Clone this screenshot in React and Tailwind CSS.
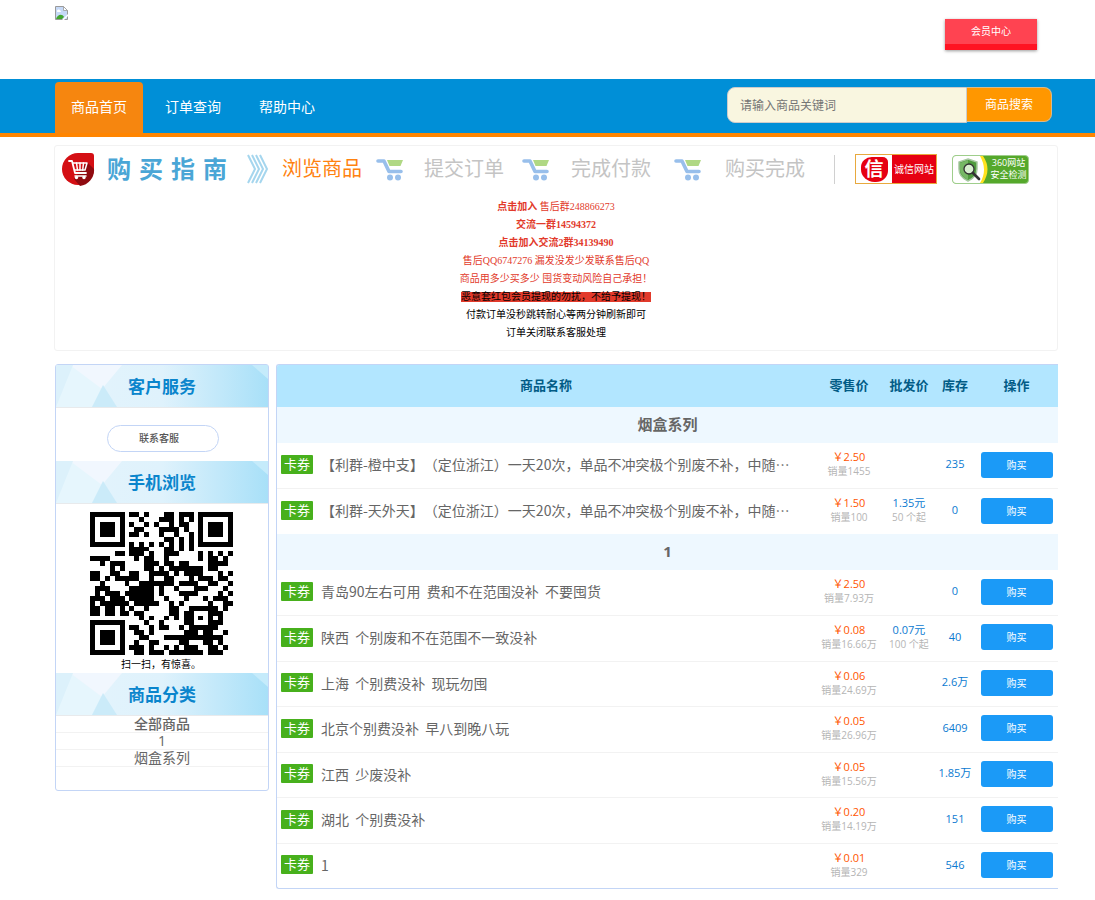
// src/App.jsx
const navItems = [
  { name: '商品首页', active: true },
  { name: '订单查询', active: false },
  { name: '帮助中心', active: false },
];

const steps = [
  { name: '提交订单', spacing: 'ml-[14px] gap-5' },
  { name: '完成付款', spacing: 'ml-[18px] gap-[21px]' },
  { name: '购买完成', spacing: 'ml-[23px] gap-[23px]' },
];

const categories = ['全部商品', '1', '烟盒系列'];

const groups = [
  {
    name: '烟盒系列',
    products: [
      {
        title: '【利群-橙中支】（定位浙江）一天20次，单品不冲突极个别废不补，中随…',
        price: '2.50',
        sales: '1455',
        stock: '235',
      },
      {
        title: '【利群-天外天】（定位浙江）一天20次，单品不冲突极个别废不补，中随…',
        price: '1.50',
        sales: '100',
        bulk: { price: '1.35元', min: '50 个起' },
        stock: '0',
      },
    ],
  },
  {
    name: '1',
    products: [
      { title: '青岛90左右可用  费和不在范围没补  不要囤货', price: '2.50', sales: '7.93万', stock: '0' },
      {
        title: '陕西  个别废和不在范围不一致没补',
        price: '0.08',
        sales: '16.66万',
        bulk: { price: '0.07元', min: '100 个起' },
        stock: '40',
      },
      { title: '上海  个别费没补  现玩勿囤', price: '0.06', sales: '24.69万', stock: '2.6万' },
      { title: '北京个别费没补  早八到晚八玩', price: '0.05', sales: '26.96万', stock: '6409' },
      { title: '江西  少废没补', price: '0.05', sales: '15.56万', stock: '1.85万' },
      { title: '湖北  个别费没补', price: '0.20', sales: '14.19万', stock: '151' },
      { title: '1', price: '0.01', sales: '329', stock: '546' },
    ],
  },
];

const qrRows = [
  '11111110110100011011101111111',
  '10000010001000111010101000001',
  '10111010100101001011001011101',
  '10111010011000111101001011101',
  '10111010110100100100101011101',
  '10000010000000011010101000001',
  '11111110101010101010101111111',
  '00000000111100011010100000000',
  '00000110111010011100001010101',
  '11110000010110010000001011010',
  '00101110000111011011000011110',
  '00001010000110101111111011000',
  '11001100110011110101111000101',
  '11010111110010011000101110110',
  '00100001001111111011110011001',
  '01110000111110100100011100010',
  '01011101111110100011110000101',
  '11101110111110010001000101110',
  '10111111011111001010000010011',
  '11011010100100001100111111010',
  '11011011011000001101100011100',
  '00000000001010010101101010100',
  '11111110000100100001100011100',
  '10000010110010110010111111000',
  '10111010011010000001110110010',
  '10111010001100011111111111100',
  '10111010010011000011000110100',
  '10000010111010010101110011010',
  '11111110011011101111111011100',
];

function QrCode() {
  return (
    <svg className="h-[143px] w-[143px]" viewBox="0 0 29 29" shapeRendering="crispEdges" role="img" aria-label="二维码">
      {qrRows.map((row, y) =>
        row.split('').map((cell, x) => (cell === '1' ? <rect key={`${x}-${y}`} x={x} y={y} width="1" height="1" /> : null))
      )}
    </svg>
  );
}

function BrokenImage() {
  return (
    <svg className="h-[14px] w-[13px]" viewBox="0 0 13 14" aria-hidden="true">
      <path d="M.5 .5h8l4 4v9H.5z" fill="#c6d9f7" stroke="#9a9a9a" />
      <path d="M8.500 .5v4h4z" fill="#fff" stroke="#9a9a9a" strokeWidth=".8" />
      <path d="M2 5c0-2 3-2 3-.5 1.500 0 1.500 1.500 0 1.500H3C2 6 2 5.500 2 5z" fill="#fff" />
      <path d="M1 13c1-4 6-6 8-2l-2 2z" fill="#43a630" />
      <path d="M7 14l6-6v2l-4 4z" fill="#fff" />
    </svg>
  );
}

function GuideLogo() {
  return (
    <svg className="h-[35px] w-[34px] shrink-0" viewBox="0 0 34 35" aria-hidden="true">
      <path d="M17 1h13q3 0 3 3v13a16 16 0 1 1-16-16z" fill="#d40f14" />
      <path d="M26 10l7 7a16 16 0 0 1-14 17l-6-7z" fill="#8f0a10" />
      <g fill="none" stroke="#fff" strokeLinecap="round" strokeLinejoin="round">
        <path d="M8 9h3l3 12h11" strokeWidth="1.800" />
        <path d="M12 11h14l-2 7H14" strokeWidth="1.500" />
        <path d="M15.500 11l1 7M19 11v7M22.500 11l-.8 7M14 24h11" strokeWidth="1.500" />
      </g>
      <circle cx="15.500" cy="25.500" r="1.700" fill="#fff" />
      <circle cx="23" cy="25.500" r="1.700" fill="#fff" />
    </svg>
  );
}

function StepArrows() {
  return (
    <svg className="ml-5 h-[30px] w-[22px] shrink-0" viewBox="0 0 22 30" fill="none" stroke="#a5d6ee" strokeWidth="2" aria-hidden="true">
      <path d="M1 1l7 14-7 14M5 1l7 14-7 14M9 1l7 14-7 14M13 1l7 14-7 14" />
    </svg>
  );
}

function StepCart() {
  return (
    <svg className="h-[23px] w-[28px]" viewBox="0 0 28 23" aria-hidden="true">
      <path d="M11 2h16l-2.500 6H13.500z" fill="#b0d884" />
      <path d="M2 3h6l5 10.500h12" fill="none" stroke="#98bfeb" strokeWidth="3.600" strokeLinecap="round" strokeLinejoin="round" />
      <circle cx="14" cy="19.500" r="3" fill="#98bfeb" />
      <circle cx="22" cy="19.500" r="3" fill="#98bfeb" />
    </svg>
  );
}

function TrustBadge() {
  return (
    <a href="#" className="ml-5 flex h-[30px] w-[82px] shrink-0 border border-[#e8a93e] bg-white">
      <span className="flex flex-1 items-center justify-center">
        <span className="flex h-[25px] w-[27px] items-center justify-center rounded-[40%_20%_45%_50%] bg-[#e60012] text-[19px] leading-none font-bold text-white">
          信
        </span>
      </span>
      <span className="flex w-[44px] items-center justify-center bg-[#e60012] text-[10px] text-white">诚信网站</span>
    </a>
  );
}

function SafetyBadge() {
  return (
    <a href="#" className="ml-[15px] flex h-[29px] w-[77px] shrink-0 overflow-hidden rounded border border-[#9fce8c] bg-[#55a82b]">
      <svg className="h-[27px] w-[36px] shrink-0" viewBox="0 0 36 27" aria-hidden="true">
        <path d="M0 0h28q8 13 0 27H0z" fill="#fff" />
        <path d="M27 0h3q9 13 0 27h-3q8-13 0-27z" fill="#ffe21f" />
        <path d="M15 3l9 3v7q0 8-9 12-9-4-9-12V6z" fill="#4f9b3d" stroke="#a7c9a0" strokeWidth="1.500" />
        <path d="M15 4v20q-8-4-8-11V7z" fill="#76b765" />
        <circle cx="16" cy="13" r="5" fill="#d8efd0" stroke="#333" strokeWidth="1.300" />
        <path d="M20 17l6 6" stroke="#333" strokeWidth="2.600" strokeLinecap="round" />
      </svg>
      <span className="flex flex-1 flex-col justify-center text-center text-[9px] leading-3 whitespace-nowrap text-white">
        <span>360网站</span>
        <span>安全检测</span>
      </span>
    </a>
  );
}

function SideHeading({ children }) {
  return (
    <div className="relative h-[43px] overflow-hidden border-b border-[#e8eaec] bg-linear-to-r from-[#e4f4fc] via-[#dff2fc] to-[#a8e0f8]">
      <svg className="absolute inset-0 h-full w-full" viewBox="0 0 212 42" preserveAspectRatio="none" aria-hidden="true">
        <path d="M14 0h22l11 22-11 20H0z" fill="#e6f6fd" />
        <path d="M14 0h52L46 24z" fill="#f1f7fe" />
        <path d="M47 20l14 22H36z" fill="#cbebf9" />
        <path d="M0 42L17 0H0z" fill="#dcf1fb" />
        <path d="M196 0l16 14V0z" fill="#c5ebfb" />
      </svg>
      <h2 className="relative text-center text-[17px] leading-[43px] font-bold text-[#0a85cc]">{children}</h2>
    </div>
  );
}

function Sidebar() {
  return (
    <aside className="w-[214px] shrink-0 overflow-hidden rounded-[3px] border border-[#c3d5f6] pb-[23px]">
      <SideHeading>客户服务</SideHeading>
      <div className="flex justify-center pt-[17px] pb-[9px] pl-0.5">
        <button className="h-[27px] w-[112px] rounded-full border border-[#c3d5f6] bg-white pr-2 text-[10px] font-medium text-[#555]">
          联系客服
        </button>
      </div>
      <SideHeading>手机浏览</SideHeading>
      <div className="flex flex-col items-center pt-2 pr-0.5">
        <QrCode />
        <p className="text-[10px] leading-[18px] text-black">扫一扫，有惊喜。</p>
      </div>
      <SideHeading>商品分类</SideHeading>
      <ul>
        {categories.map((name, i) => (
          <li key={name} className="h-[17px] border-b border-[#f2f2f2] text-center">
            <a href="#" className={`block text-sm leading-4 text-[#666] ${i === 0 ? 'font-medium' : ''}`}>
              {name}
            </a>
          </li>
        ))}
      </ul>
    </aside>
  );
}

function ProductRow({ product }) {
  return (
    <tr className="h-[45px] border-b border-[#f2f2f2] last:border-b-0 odd:h-[46px]">
      <td className="pb-0.5 pl-1">
        <div className="flex items-center gap-2">
          <span className="h-[19px] w-8 shrink-0 rounded-[1px] bg-[#47b01c] text-center text-[13px] leading-[19px] text-white">卡券</span>
          <a
            href="#"
            className="overflow-hidden font-['Noto_Sans_CJK_SC',sans-serif] text-sm whitespace-pre text-[#666] [text-spacing-trim:space-all]"
          >
            {product.title}
          </a>
        </div>
      </td>
      <td className="pb-0.5 text-center">
        <div className="text-[11px] leading-[15px] text-[#ff5500]">￥{product.price}</div>
        <div className="text-[10px] leading-[15px] text-[#b5b5b5]">销量{product.sales}</div>
      </td>
      <td className="pb-0.5 text-center whitespace-nowrap">
        {product.bulk && (
          <>
            <div className="text-[11px] leading-[15px] text-[#0b7ad1]">{product.bulk.price}</div>
            <div className="text-[10px] leading-[15px] text-[#b5b5b5]">{product.bulk.min}</div>
          </>
        )}
      </td>
      <td className="pb-0.5 text-center text-[11px] whitespace-nowrap text-[#0b7ad1]">{product.stock}</td>
      <td className="pb-0.5 text-center">
        <button className="h-[26px] w-[72px] rounded-[3px] bg-[#1b9af7] align-middle text-[10px] leading-[26px] text-white">购买</button>
      </td>
    </tr>
  );
}

function ProductTable() {
  return (
    <div className="min-w-0 flex-1 overflow-hidden rounded-l-[3px] border border-r-0 border-[#c3d5f6]">
      <table className="w-full table-fixed border-collapse">
        <thead className="bg-[#b2e6ff] text-[13px] text-[#025c86]">
          <tr className="h-[42px]">
            <th>商品名称</th>
            <th className="w-[68px]">零售价</th>
            <th className="w-[52px]">批发价</th>
            <th className="w-[40px]">库存</th>
            <th className="w-[83px]">操作</th>
          </tr>
        </thead>
        {groups.map((group) => (
          <tbody key={group.name}>
            <tr className="h-9 bg-[#eef8ff]">
              <th colSpan="5" className="pb-0.5 text-[15px] leading-5 text-[#666]">{group.name}</th>
            </tr>
            {group.products.map((product) => (
              <ProductRow key={product.title} product={product} />
            ))}
          </tbody>
        ))}
      </table>
    </div>
  );
}

function Notice() {
  return (
    <div className="pt-[6px] pb-2 text-center font-['Liberation_Serif','Noto_Sans_CJK_SC',serif] text-[10px] leading-[18px] text-black">
      <div className="text-[#e23a2b]">
        <p><strong>点击加入</strong> 售后群248866273</p>
        <p className="font-bold">交流一群14594372</p>
        <p className="font-bold">点击加入交流2群34139490</p>
        <p>售后QQ6747276 漏发没发少发联系售后QQ</p>
        <p>商品用多少买多少 囤货变动风险自己承担！</p>
      </div>
      <p className="flex h-[18px] items-center justify-center">
        <span className="bg-[#e23a2b] leading-[10px]">恶意套红包会员提现的勿扰，不给予提现！</span>
      </p>
      <p>付款订单没秒跳转耐心等两分钟刷新即可</p>
      <p>订单关闭联系客服处理</p>
    </div>
  );
}

export default function App() {
  return (
    <div lang="zh-CN" className="bg-white pb-3 font-['Open_Sans','Noto_Sans_CJK_SC',sans-serif]">
      {/* Header */}
      <header className="flex h-[79px] items-start justify-between pr-[58px] pl-[55px]">
        <a href="#" aria-label="首页" className="mt-[6px]">
          <BrokenImage />
        </a>
        <button className="mt-[19px] h-[31px] w-[92px] border-b-[6px] border-[#ff1322] bg-[#ff4351] text-[10px] text-white shadow-[0_1px_3px_rgba(0,0,0,0.4)]">
          会员中心
        </button>
      </header>

      {/* Navigation */}
      <nav className="flex h-[58px] justify-between border-b-4 border-[#ff8500] bg-[#008fd7] pr-[43px] pl-[55px]">
        <div className="flex gap-[6px] pt-[3px]">
          {navItems.map((item) => (
            <a
              key={item.name}
              href="#"
              className={`w-[88px] rounded-t text-center text-sm leading-[50px] text-white ${item.active ? 'bg-[#f6860f]' : ''}`}
            >
              {item.name}
            </a>
          ))}
        </div>
        <form className="flex items-start pt-2" onSubmit={(e) => e.preventDefault()}>
          <input
            type="text"
            aria-label="商品关键词"
            placeholder="请输入商品关键词"
            className="h-9 w-60 rounded-l-lg border border-[#ccc] bg-[#f9f6e0] px-3 text-xs text-[#666] placeholder:text-[#757575]"
          />
          <button className="h-[35px] w-[85px] rounded-r-lg border border-l-0 border-[#d9b98a] bg-[#ff9700] text-xs text-white">商品搜索</button>
        </form>
      </nav>

      <main className="pr-[37px] pl-[55px]">
        {/* Guide and notice */}
        <section className="mt-2 -ml-px rounded-[3px] border border-[#f2f2f2]">
          <div className="flex h-[46px] items-center pl-[6px] whitespace-nowrap">
            <GuideLogo />
            <div className="ml-3 flex gap-2 text-2xl font-bold text-[#4aa6d6]">
              {'购买指南'.split('').map((char) => (
                <span key={char}>{char}</span>
              ))}
            </div>
            <StepArrows />
            <span className="ml-[13px] text-xl text-[#ff8210]">浏览商品</span>
            {steps.map((step) => (
              <div key={step.name} className={`flex items-center ${step.spacing}`}>
                <StepCart />
                <span className="text-xl text-[#c4c4c4]">{step.name}</span>
              </div>
            ))}
            <span className="ml-[29px] h-[29px] border-l border-[#d0d0d0]" />
            <TrustBadge />
            <SafetyBadge />
          </div>
          <Notice />
        </section>

        <div className="mt-[13px] flex items-start gap-[7px]">
          <Sidebar />
          <ProductTable />
        </div>
      </main>
    </div>
  );
}
